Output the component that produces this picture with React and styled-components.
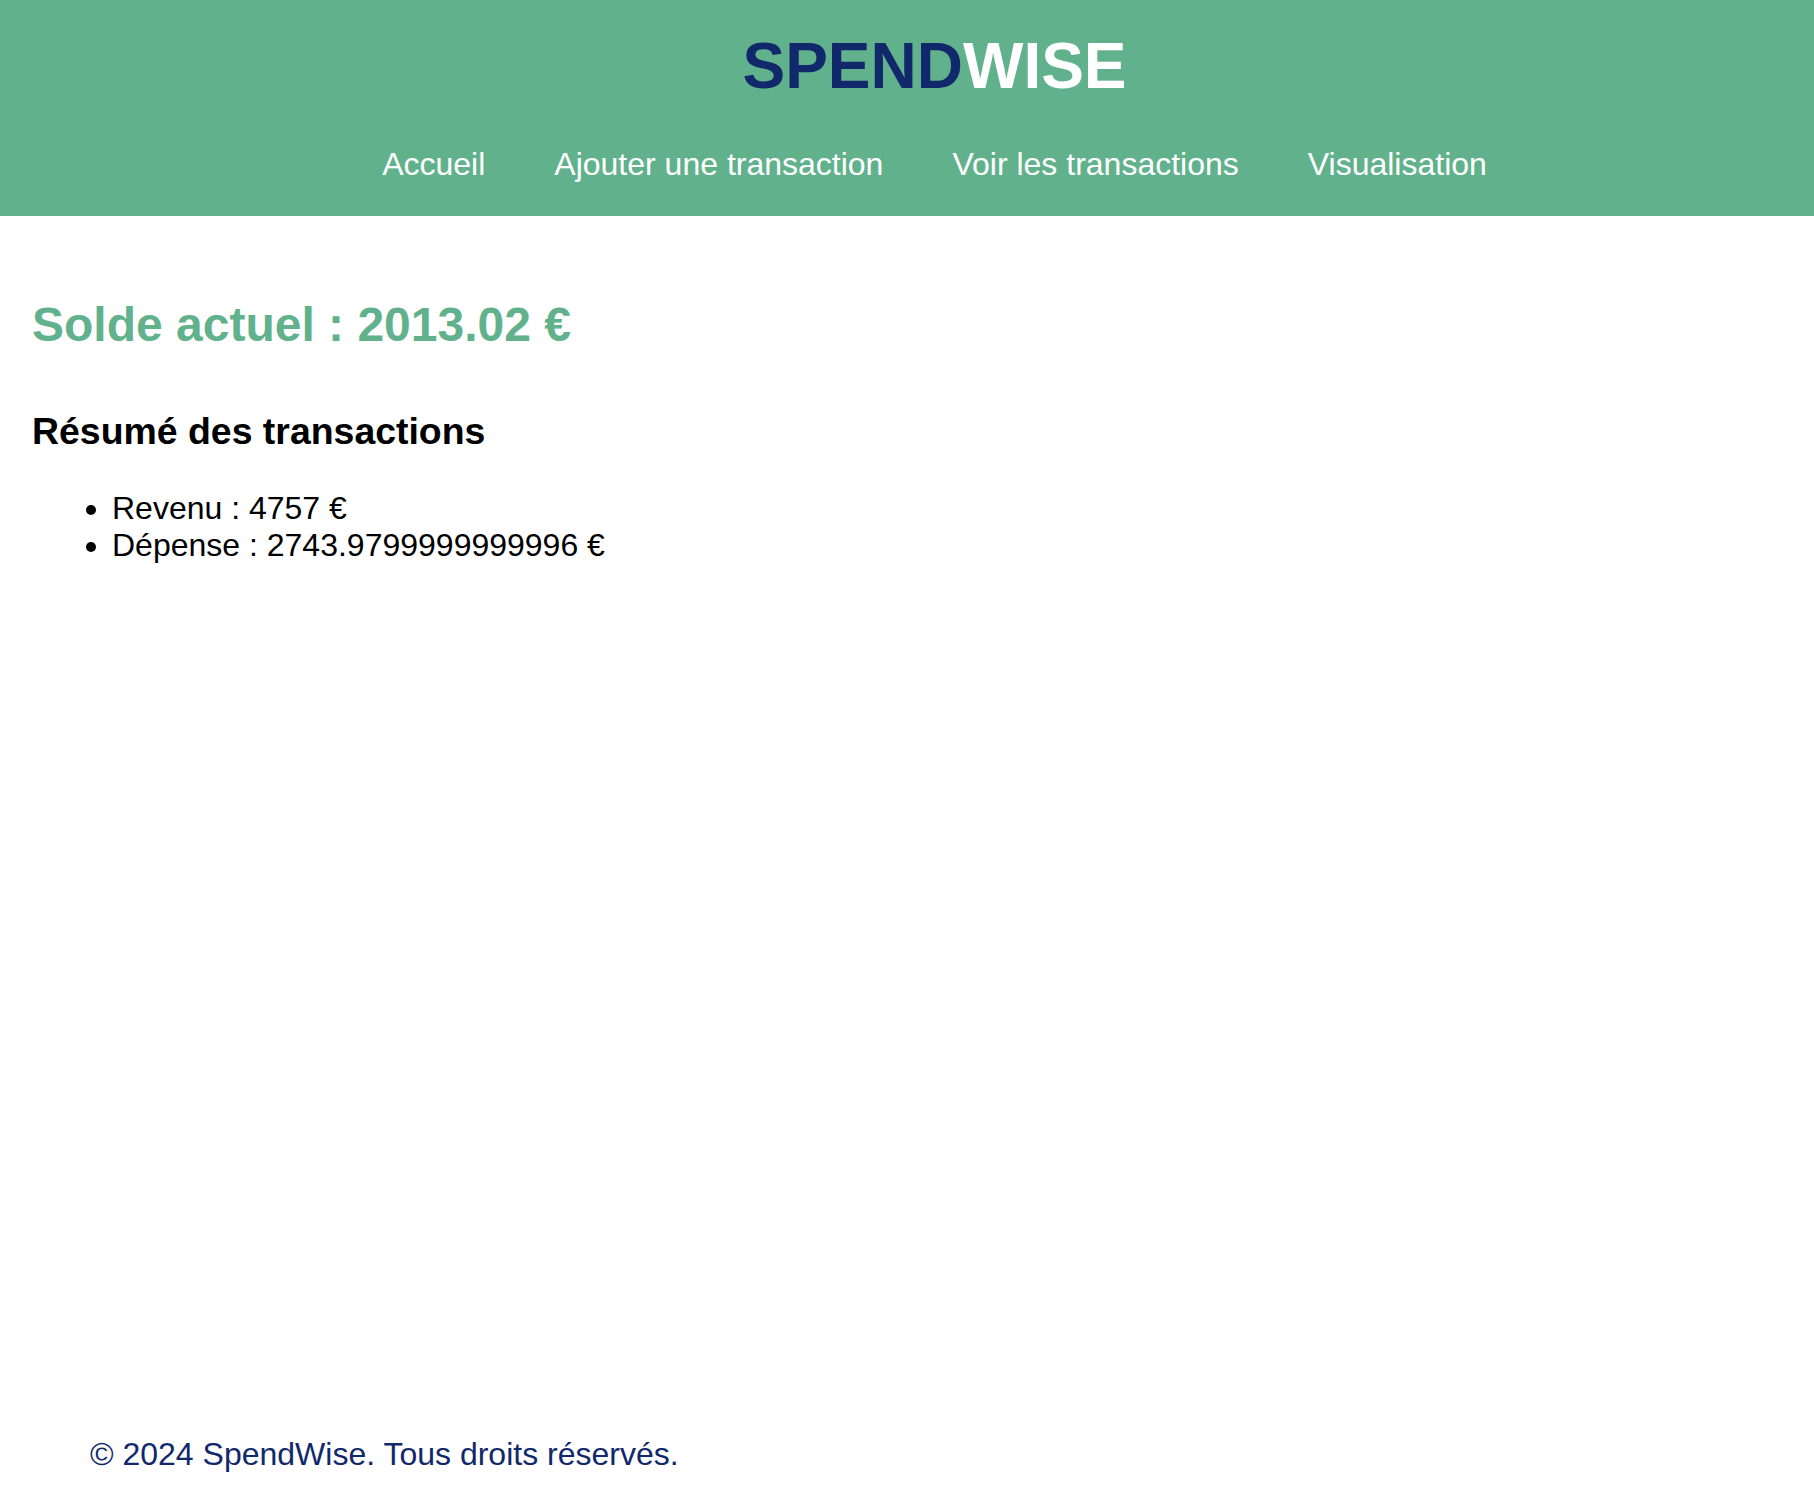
import React from 'react';
import styled, { createGlobalStyle } from 'styled-components';

const links = ['Accueil', 'Ajouter une transaction', 'Voir les transactions', 'Visualisation'];

const App = () => {
  return (
    <Page>
      <GlobalStyle />
      <Header>
        <Logo>
          <LogoPart $tone="navy">SPEND</LogoPart>
          <LogoPart $tone="white">WISE</LogoPart>
        </Logo>
        <Nav>
          {links.map((label) => (
            <NavLink key={label} href="#">
              {label}
            </NavLink>
          ))}
        </Nav>
      </Header>
      <Main>
        <Balance>Solde actuel : 2013.02 €</Balance>
        <SummaryTitle>Résumé des transactions</SummaryTitle>
        <SummaryList>
          <li>Revenu : 4757 €</li>
          <li>Dépense : 2743.9799999999996 €</li>
        </SummaryList>
      </Main>
      <Footer>© 2024 SpendWise. Tous droits réservés.</Footer>
    </Page>
  );
};
// ========== VARIABLES ========== //
const green = '#61b28c';
const navy = '#11296b';
const font = '"Liberation Sans", Arial, Helvetica, sans-serif';
// ========== STYLED COMPONENTS ========== //
const GlobalStyle = createGlobalStyle`
  body {
    margin: 0;
    font-family: ${font};
    background: #ffffff;
  }
`;
const Page = styled.div`
  display: flex;
  flex-direction: column;
  min-height: 100vh;
`;
const Header = styled.header`
  background-color: ${green};
  padding: 29px 0 33px 55px;
  text-align: center;
`;
const Logo = styled.h1`
  margin: 0;
  font-size: 64px;
  font-weight: 700;
  line-height: normal;
`;
const LogoPart = styled.span`
  color: ${(props) => (props.$tone === 'navy' ? navy : '#ffffff')};
`;
const Nav = styled.nav`
  display: flex;
  justify-content: center;
  gap: 69px;
  margin-top: 43px;
`;
const NavLink = styled.a`
  color: #ffffff;
  font-size: 32px;
  line-height: normal;
  text-decoration: none;
`;
const Main = styled.main`
  padding: 0 32px;
`;
const Balance = styled.h2`
  margin: 81px 0 0;
  color: ${green};
  font-size: 48px;
  font-weight: 700;
  line-height: normal;
`;
const SummaryTitle = styled.h3`
  margin: 58px 0 0;
  color: #000000;
  font-size: 37.44px;
  font-weight: 700;
  line-height: normal;
`;
const SummaryList = styled.ul`
  margin: 37px 0 0;
  padding-left: 80px;
  font-size: 32px;
  line-height: normal;
  color: #000000;
`;
const Footer = styled.footer`
  margin-top: auto;
  padding: 0 0 15px 90px;
  color: ${navy};
  font-size: 32px;
  line-height: normal;
`;

export default App;
